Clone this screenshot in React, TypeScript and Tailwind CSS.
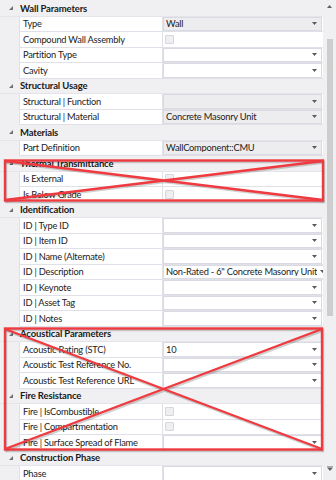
import React from "react";

type Row = { l: string; t: "ro" | "combo" | "check"; v?: string };
type Section = { title: string; rows: Row[] };

const sections: Section[] = [
  {
    title: "Wall Parameters",
    rows: [
      { l: "Type", t: "ro", v: "Wall" },
      { l: "Compound Wall Assembly", t: "check" },
      { l: "Partition Type", t: "combo" },
      { l: "Cavity", t: "combo" },
    ],
  },
  {
    title: "Structural Usage",
    rows: [
      { l: "Structural | Function", t: "ro" },
      { l: "Structural | Material", t: "ro", v: "Concrete Masonry Unit" },
    ],
  },
  { title: "Materials", rows: [{ l: "Part Definition", t: "ro", v: "WallComponent::CMU" }] },
  {
    title: "Thermal Transmittance",
    rows: [
      { l: "Is External", t: "check" },
      { l: "Is Below Grade", t: "check" },
    ],
  },
  {
    title: "Identification",
    rows: [
      { l: "ID | Type ID", t: "combo" },
      { l: "ID | Item ID", t: "combo" },
      { l: "ID | Name (Alternate)", t: "combo" },
      { l: "ID | Description", t: "combo", v: 'Non-Rated - 6" Concrete Masonry Unit' },
      { l: "ID | Keynote", t: "combo" },
      { l: "ID | Asset Tag", t: "combo" },
      { l: "ID | Notes", t: "combo" },
    ],
  },
  {
    title: "Acoustical Parameters",
    rows: [
      { l: "Acoustic Rating (STC)", t: "combo", v: "10" },
      { l: "Acoustic Test Reference No.", t: "combo" },
      { l: "Acoustic Test Reference URL", t: "combo" },
    ],
  },
  {
    title: "Fire Resistance",
    rows: [
      { l: "Fire | IsCombustible", t: "check" },
      { l: "Fire | Compartmentation", t: "check" },
      { l: "Fire | Surface Spread of Flame", t: "combo" },
    ],
  },
  { title: "Construction Phase", rows: [{ l: "Phase", t: "combo" }] },
];

function Arrow() {
  return (
    <svg width="5" height="3" viewBox="0 0 5 3" className="shrink-0">
      <path d="M0 0 L5 0 L2.5 3 Z" fill="#5a5a5a" />
    </svg>
  );
}

function Value({ r }: { r: Row }) {
  if (r.t === "check") {
    return (
      <div className="flex h-full flex-1 items-center bg-white pl-[2px]">
        <div className="h-[9px] w-[9px] rounded-[1px] border border-[#d6d6dc] bg-[#efeff1]" />
      </div>
    );
  }
  const ro = r.t === "ro";
  return (
    <div
      className={`flex h-full flex-1 items-center gap-[3px] overflow-hidden border border-[#dadae2] pl-[2px] pr-[4px] ${
        ro ? "bg-[#ededef]" : "bg-white"
      }`}
    >
      <span className="flex-1 overflow-hidden whitespace-nowrap">{r.v ?? ""}</span>
      <Arrow />
    </div>
  );
}

export default function App() {
  return (
    <div
      className="relative flex h-[480px] w-[336px] overflow-hidden bg-[#f0f0f2] text-[9.3px] leading-none tracking-[-0.22px] text-[#222]"
      style={{ fontFamily: '"Lato", "Open Sans", sans-serif' }}
    >
      <div className="flex w-[323px] flex-col pt-[1px]">
        {sections.map((s) => (
          <React.Fragment key={s.title}>
            <div className="flex h-[15.5px] shrink-0 items-center border-b border-[#e4e4ea] bg-[#f0f0f2]">
              <div className="flex w-[20px] shrink-0 items-center justify-center pl-[2px]">
                <svg width="4" height="4" viewBox="0 0 4 4">
                  <path d="M4 0 L4 4 L0 4 Z" fill="#707070" />
                </svg>
              </div>
              <span className="text-[9.5px] font-bold tracking-[-0.15px] text-[#1a1a1a]">{s.title}</span>
            </div>
            {s.rows.map((r) => (
              <div key={r.l} className="flex h-[15.5px] shrink-0">
                <div className="w-[19px] shrink-0 bg-[#f0f0f2]" />
                <div className="flex w-[144px] shrink-0 items-center overflow-hidden whitespace-nowrap border-b border-l border-r border-[#e0e0e8] bg-white pl-[3px]">
                  {r.l}
                </div>
                <div className="flex flex-1 border-b border-[#e0e0e8] bg-white pr-[1px]">
                  <Value r={r} />
                </div>
              </div>
            ))}
          </React.Fragment>
        ))}
      </div>
      <div className="flex w-[13px] flex-col items-center bg-[#f0f0f2]">
        <div className="flex h-[12px] items-center justify-center pt-[1px]">
          <svg width="5" height="3" viewBox="0 0 5 3">
            <path d="M0 3 L5 3 L2.5 0 Z" fill="#606060" />
          </svg>
        </div>
        <div className="mt-[27px] h-[277px] w-[6px] bg-[#cdcdcd]" />
        <div className="flex-1" />
        <div className="flex h-[14px] items-start justify-center">
          <svg width="6" height="5" viewBox="0 0 6 5">
            <path d="M0 0 L6 0" stroke="#606060" strokeWidth="1" />
            <path d="M0 1.5 L6 1.5 L3 5 Z" fill="#606060" />
          </svg>
        </div>
      </div>
      <svg className="pointer-events-none absolute left-0 top-0" width="336" height="480" viewBox="0 0 336 480">
        <g stroke="#000" strokeOpacity="0.18" strokeWidth="2.5" fill="none" transform="translate(1,1.5)">
          <rect x="5" y="160.5" width="318" height="40" />
          <path d="M5 161 L323 200 M5 200 L323 161" />
          <rect x="5" y="328.5" width="317" height="121" />
          <path d="M5 329 L322 449 M5 449 L322 329" />
        </g>
        <g stroke="#ef3a3f" strokeWidth="2.4" fill="none">
          <rect x="5" y="160.5" width="318" height="40" />
          <path d="M5 161 L323 200 M5 200 L323 161" />
          <rect x="5" y="328.5" width="317" height="121" />
          <path d="M5 329 L322 449 M5 449 L322 329" />
        </g>
      </svg>
    </div>
  );
}
